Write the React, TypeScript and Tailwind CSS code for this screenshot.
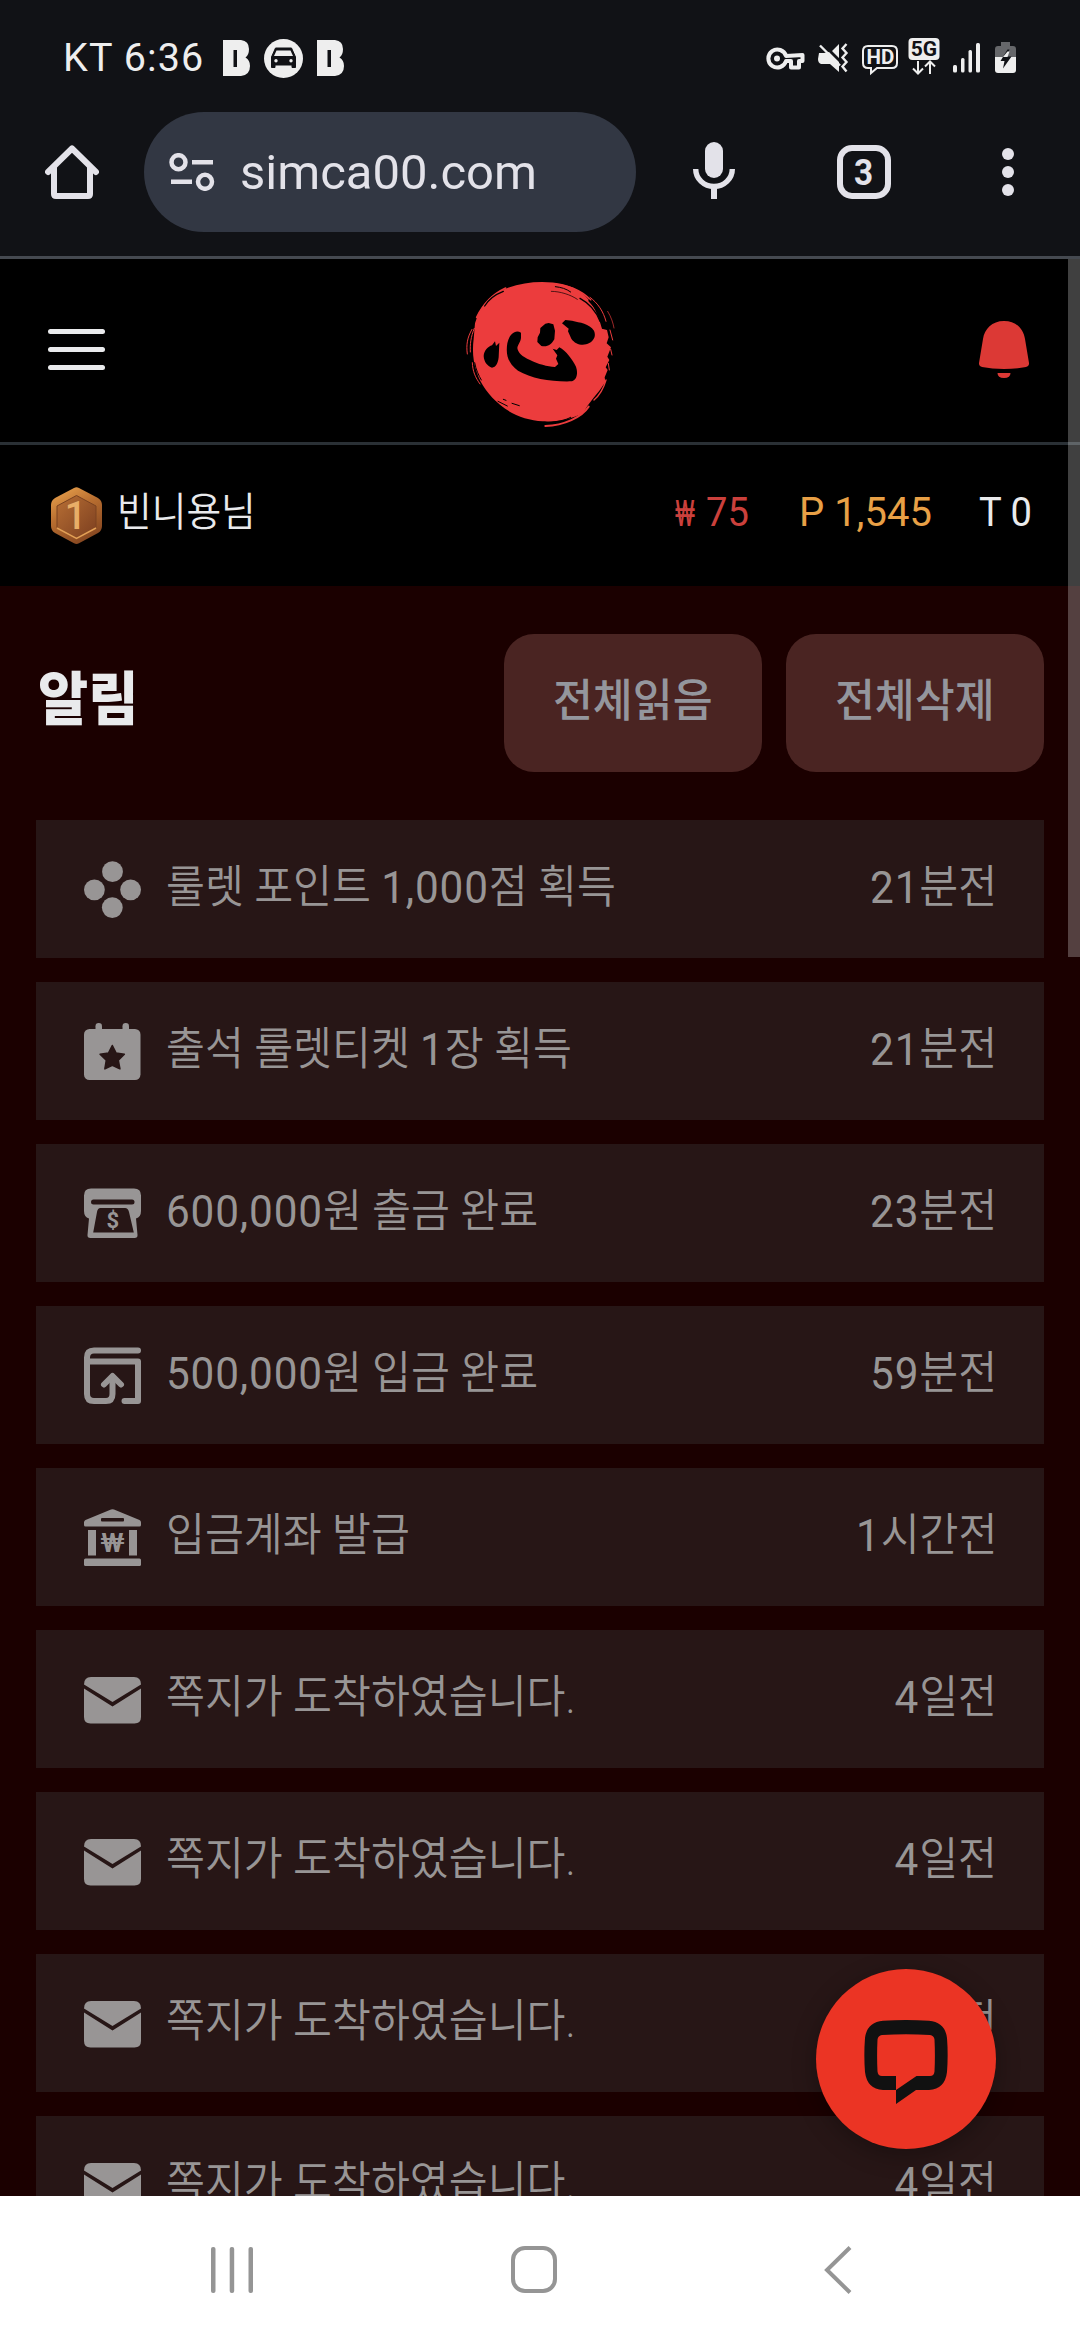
import React from "react";

type IconKind = "point" | "ticket" | "withdraw" | "deposit" | "bank" | "mail";

interface Notice {
  icon: IconKind;
  text: string;
  time: string;
}

const notices: Notice[] = [
  { icon: "point", text: "룰렛 포인트 1,000점 획득", time: "21분전" },
  { icon: "ticket", text: "출석 룰렛티켓 1장 획득", time: "21분전" },
  { icon: "withdraw", text: "600,000원 출금 완료", time: "23분전" },
  { icon: "deposit", text: "500,000원 입금 완료", time: "59분전" },
  { icon: "bank", text: "입금계좌 발급", time: "1시간전" },
  { icon: "mail", text: "쪽지가 도착하였습니다.", time: "4일전" },
  { icon: "mail", text: "쪽지가 도착하였습니다.", time: "4일전" },
  { icon: "mail", text: "쪽지가 도착하였습니다.", time: "4일전" },
  { icon: "mail", text: "쪽지가 도착하였습니다.", time: "4일전" },
];

const NoticeIcon = ({ kind }: { kind: IconKind }) => (
  <svg width="57" height="57" viewBox="0 0 57 57" fill="#989595" className="shrink-0">
    {kind === "point" && (
      <>
        <circle cx="28.5" cy="10.7" r="10.4" />
        <circle cx="10.4" cy="28.8" r="10.4" />
        <circle cx="46.6" cy="28.8" r="10.4" />
        <circle cx="28.3" cy="46.6" r="10.4" />
      </>
    )}
    {kind === "ticket" && (
      <>
        <rect x="0" y="6" width="56.5" height="51" rx="5.5" />
        <rect x="11.5" y="0" width="6.5" height="12" rx="3.2" />
        <rect x="38.5" y="0" width="6.5" height="12" rx="3.2" />
        <path
          d="M28.3 22.5l3.8 7.6 8.2 1.2-6 6 1.6 8.5-7.6-3.6-7.4 3.6 1.4-8.5-6.2-6 8.4-1.2z"
          fill="#271616"
          stroke="#271616"
          strokeWidth="1.6"
          strokeLinejoin="round"
        />
      </>
    )}
    {kind === "withdraw" && (
      <>
        <path d="M7 3.500h43q7 0 7 7V26q0 6-5 7.500L53.500 50q.3 3-3 3H6.500q-3.300 0-3-3L5 33.500q-5-1.500-5-7.500V10.500q0-7 7-7z" />
        <rect x="7" y="14.500" width="43.500" height="5" rx="2.500" fill="#271616" />
        <path d="M16.500 23h24.500q3 0 4 4l4.800 20.500H9.200L13 27q.7-4 3.500-4z" fill="#271616" />
        <text x="28.700" y="43" textAnchor="middle" fontSize="22" fontWeight="700" fontFamily="Roboto, sans-serif">
          $
        </text>
      </>
    )}
    {kind === "deposit" && (
      <g fill="none" stroke="#989595" strokeWidth="6" strokeLinecap="round" strokeLinejoin="round">
        <path d="M54 3.500H10q-7 0-7 7V47q0 7 7 7h12q6.500 0 6.500-7V30" />
        <path d="M4 14.500h50V54H40.500" />
        <path d="M20 37.500l8.500-8.500 8.500 8.500" />
      </g>
    )}
    {kind === "bank" && (
      <>
        <path d="M27 .5q1.500-.7 3 0L55.500 11q1.500.7 1.500 2.500V16q0 1.500-1.500 1.500h-54Q0 17.500 0 16v-2.500Q0 11.700 1.500 11z" />
        <rect x="17" y="9" width="23" height="3.500" rx="1" fill="#271616" />
        <rect x="4" y="21" width="8" height="25.500" />
        <rect x="45" y="21" width="8" height="25.500" />
        <rect x="0" y="49.500" width="57" height="7.500" rx="1.500" />
        <text
          x="16.500"
          y="43"
          textLength="24"
          lengthAdjust="spacingAndGlyphs"
          fontSize="26"
          fontWeight="500"
          fontFamily="Roboto, 'Noto Sans CJK KR', sans-serif"
        >
          ₩
        </text>
      </>
    )}
    {kind === "mail" && (
      <>
        <path d="M0 13.500Q0 6 7 6h43q7 0 7 7.500L28.500 31z" />
        <path d="M0 17.500L28.500 35.500 57 17.500V46q0 6.500-6.500 6.500h-44Q0 52.500 0 46z" />
      </>
    )}
  </svg>
);

const BIcon = () => (
  <svg width="27" height="36" viewBox="0 0 27 36" fill="#eee">
    <path fillRule="evenodd" d="M0 0h18q8 1 8 9 0 6-3.500 8.500Q27 20 27 26q0 9-9 10H0zM10.500 10v17h3.500V10z" />
  </svg>
);

const StatusBar = () => (
  <div className="flex h-[112px] items-start pl-[63px] pr-[63px] pt-[38px] text-[#eee]">
    <span className="w-[141px] whitespace-nowrap text-[39.500px] leading-[40px] tracking-[1.100px]">KT 6:36</span>
    <div className="ml-[19px] flex h-[40px] items-center gap-[14px]">
      <BIcon />
      <svg width="39" height="39" viewBox="0 0 39 39">
        <circle cx="19.500" cy="19.500" r="19.500" fill="#eee" />
        <path
          d="M11.500 9h16l4 9v10.500h-3.500V26H11v2.500H7.500V18z"
          fill="#111216"
          stroke="#111216"
          strokeLinejoin="round"
        />
        <path d="M12.500 11.500h14l2.500 5.500H10z" fill="#eee" />
        <circle cx="12" cy="21.700" r="1.700" fill="#eee" />
        <circle cx="27" cy="21.700" r="1.700" fill="#eee" />
      </svg>
      <BIcon />
    </div>
    <svg className="ml-auto" width="252" height="40" viewBox="765 38 252 40" fill="#eee">
      <g fill="none" stroke="#eee" strokeWidth="4">
        <path d="M786 56a9 9 0 1 0 0 5h5v6.500h8V61h3.500v-6z" strokeLinejoin="round" />
      </g>
      <circle cx="777" cy="58.500" r="3" />
      <path d="M819 53h5l5-1 10 10v10l-9-8h-9q-3-1-3-5zM839 44v14l-7-7z" />
      <path d="M820 45.500l20 20" stroke="#eee" strokeWidth="2.400" />
      <path d="M846.500 44l-4 4.500 4 4.500-4 4.500 4 4.500-4 4.500 4 5" fill="none" stroke="#eee" strokeWidth="2.400" />
      <path
        d="M868 46h24q5 0 5 5v12q0 5-5 5h-15l-6 5v-5h-3q-5 0-5-5V51q0-5 5-5z"
        fill="none"
        stroke="#eee"
        strokeWidth="2"
      />
      <text x="880.500" y="64.200" textAnchor="middle" fontSize="20.500" fontWeight="700" fontFamily="Roboto, sans-serif">
        HD
      </text>
      <rect x="908.500" y="38" width="31" height="22" rx="4" />
      <text
        x="924"
        y="56"
        textAnchor="middle"
        fontSize="21"
        fontWeight="700"
        fill="#111216"
        fontFamily="Roboto, sans-serif"
      >
        5G
      </text>
      <path
        d="M918 61v12.500m-5-5l5 5 5-5M930 74V61.500m-5 5l5-5 5 5"
        fill="none"
        stroke="#eee"
        strokeWidth="2"
      />
      <rect x="953" y="65" width="4" height="7.500" rx="1.500" />
      <rect x="961" y="58" width="3.500" height="14.500" rx="1.500" />
      <rect x="968.500" y="50" width="3.500" height="22.500" rx="1.500" />
      <rect x="976" y="43" width="4" height="29.500" rx="1.500" />
      <path d="M995 57V49q0-3 3-3h3v-4h9v4h3q3 0 3 3v8z" fill="#66676a" />
      <path d="M995 57h21v13q0 3-3 3h-15q-3 0-3-3z" />
      <path d="M1007.500 49.500l-7 11.500h4l-1.500 7.500 8.500-12h-5l3-7z" fill="#111216" />
      <path d="M1003 57l4.500-5.500h2l-2 5.500z" fill="#eee" />
    </svg>
  </div>
);

const BrowserBar = () => (
  <div className="flex h-[147px] items-start border-b-[3px] border-[#454950] pl-[45px] text-[#e3e2e9]">
    <svg className="mt-[33px]" width="54" height="54" viewBox="0 0 54 54" fill="none" stroke="#e3e2e9" strokeWidth="6">
      <path d="M3 27L27 3.500 51 27" strokeLinecap="round" strokeLinejoin="round" />
      <path d="M9 20v29q0 2 2 2h32q2 0 2-2V20" />
    </svg>
    <div className="ml-[45px] flex h-[120px] w-[492px] items-center rounded-full bg-[#323743] pl-[25px]">
      <svg width="46" height="38" viewBox="0 0 46 38" fill="none" stroke="#e3e2e9" strokeWidth="4.500">
        <circle cx="9.500" cy="9.200" r="7" />
        <circle cx="36" cy="28.800" r="7" />
        <path d="M23 9.200h21M2 28.800h21" />
      </svg>
      <span className="ml-[25px] mt-[2px] whitespace-nowrap text-[49px] leading-[60px]">simca00.com</span>
    </div>
    <svg className="ml-[57px] mt-[30px]" width="42" height="57" viewBox="0 0 42 57" fill="#e3e2e9">
      <rect x="12" y="0" width="18" height="36" rx="9" />
      <path d="M2.700 27a18.300 17.500 0 0 0 36.600 0" fill="none" stroke="#e3e2e9" strokeWidth="5.400" />
      <path d="M18 45h6v12h-6z" />
    </svg>
    <div className="ml-[102px] mt-[33px] flex size-[54px] items-center justify-center rounded-[15px] border-[6px] border-[#e3e2e9] text-[37px] font-bold leading-none">
      <span className="inline-block scale-x-[0.9]">3</span>
    </div>
    <div className="ml-[111px] mt-[36px] flex flex-col gap-[6px]">
      <i className="size-[12px] rounded-full bg-[#e3e2e9]" />
      <i className="size-[12px] rounded-full bg-[#e3e2e9]" />
      <i className="size-[12px] rounded-full bg-[#e3e2e9]" />
    </div>
  </div>
);

// brushed red circle with the 心 strokes cut out
const Logo = () => (
  <svg width="160" height="160" viewBox="60 42 480 480" fill="#ec3c3d">
    <path d="M306 66C350 66 392 74 425 98C452 120 468 150 478 180L486 206L501 210L506 232L500 250L513 262L502 290L508 300L497 322L503 330L494 352L496 366L478 392L462 412L442 438L430 458C392 480 345 486 308 484C262 480 216 466 180 434C148 408 122 374 110 336C98 300 97 270 101 236L105 190C112 164 124 142 142 122C182 82 246 66 306 66Z" />
    <g fill="none" stroke="#ec3c3d" strokeLinecap="round">
      <path d="M197 84C158 102 128 134 110 172" strokeWidth="5" />
      <path d="M96 208C82 232 78 254 82 282" strokeWidth="3" />
      <path d="M103 205C92 232 90 252 91 276" strokeWidth="3" />
      <path d="M97 308C98 335 106 352 120 372" strokeWidth="3" />
      <path d="M316 498C372 496 425 472 446 440" strokeWidth="6" />
      <path d="M330 72C385 74 424 90 452 120" strokeWidth="5" />
      <path d="M450 112C474 130 490 154 498 184" strokeWidth="3" />
      <path d="M503 154C514 172 519 188 522 204" strokeWidth="2" />
      <path d="M498 360C490 388 476 408 462 420" strokeWidth="4" />
      <path d="M510 210L518 240M512 268L516 285M505 310L508 330" strokeWidth="3" />
    </g>
    <g fill="none" stroke="#000" strokeLinecap="round">
      <path d="M190 94C164 104 146 118 134 138" strokeWidth="4" />
      <path d="M334 94C360 94 392 104 412 118" strokeWidth="2" />
      <path d="M346 80C364 82 378 86 392 96" strokeWidth="3" />
      <path d="M420 115C448 130 468 152 480 184" strokeWidth="4" />
      <path d="M448 122C470 142 484 164 490 204" strokeWidth="6" />
      <path d="M104 308C108 330 116 346 124 360" strokeWidth="3" />
      <path d="M174 424L202 438M190 418L198 421M216 430L238 437" strokeWidth="3" />
      <path d="M320 488C352 486 378 480 392 472" strokeWidth="3" />
    </g>
    <g fill="#000">
      <path d="M165 244L168 258L178 248L176 292C174 310 168 322 156 323C142 318 132 306 131 288C132 272 144 260 156 256Z" />
      <path d="M243 218C226 208 208 222 202 250C196 286 206 312 234 332C276 356 336 366 396 364C410 360 415 340 408 320C398 300 378 272 358 262L350 270L338 266L352 286L348 296L355 312L345 321C322 320 294 312 270 300C246 290 234 278 232 264C234 252 244 244 243 230Z" />
      <path d="M316 191L326 189L340 193L345 212L343 238C334 254 322 262 304 258L292 246L293 232L300 218L301 204Z" />
      <path d="M366 190L376 180L396 182C420 188 448 190 462 212C468 226 464 240 448 249C430 259 406 254 394 236L384 214L386 206Z" />
    </g>
  </svg>
);

const SiteHeader = () => (
  <header className="flex h-[186px] shrink-0 items-start justify-between border-b-[3px] border-[#2a3035] bg-black pl-[48px] pr-[51px]">
    <div className="mt-[70px] flex w-[57px] flex-col gap-[13px]">
      <i className="h-[5px] rounded-full bg-[#e9eaec]" />
      <i className="h-[5px] rounded-full bg-[#e9eaec]" />
      <i className="h-[5px] rounded-full bg-[#e9eaec]" />
    </div>
    <div className="ml-[-4px] mt-[15px]">
      <Logo />
    </div>
    <svg className="mt-[62px]" width="50" height="57" viewBox="0 0 50 57" fill="#dc3935">
      <path d="M25 0c12 0 19.500 8 21 18l4 24q.4 3-3 4-10 2-22 2T3 46q-3.400-1-3-4l4-24C5.500 8 13 0 25 0zM18.500 52h13q0 5-6.500 5t-6.500-5z" />
    </svg>
  </header>
);

const UserBar = () => (
  <div className="flex h-[141px] shrink-0 items-start bg-black pl-[51px] pr-[48px] pt-[42px] text-[#e9eaec]">
    <svg width="51" height="57" viewBox="0 0 51 57">
      <defs>
        <linearGradient id="rim" x1="0" y1="0" x2=".5" y2="1">
          <stop offset="0" stopColor="#efa850" />
          <stop offset=".5" stopColor="#b86e30" />
          <stop offset="1" stopColor="#8a4a22" />
        </linearGradient>
        <linearGradient id="face" x1="0" y1="0" x2="1" y2="1">
          <stop offset="0" stopColor="#b86f34" />
          <stop offset="1" stopColor="#7c3f20" />
        </linearGradient>
      </defs>
      <path d="M23 1q2.500-1.300 5 0l19 10q4 2.500 4 7v21q0 4.500-4 7L28 56.300q-2.500 1.200-5 0L4 46q-4-2.500-4-7V18q0-4.500 4-7z" fill="url(#rim)" />
      <path d="M25.500 8.500L45 19v21.500L25.500 51 6 40.500V19z" fill="url(#face)" stroke="#7a4220" strokeWidth="1" />
      <path d="M6 41l19.500 10.300L45 41" fill="none" stroke="#e3a056" strokeWidth="1.500" />
      <text x="24.500" y="42" textAnchor="middle" fontSize="38" fontWeight="500" fill="#e9ae68" fontFamily="Roboto, sans-serif">
        1
      </text>
    </svg>
    <span className="ml-[15px] mt-[1px] origin-left scale-x-[0.955] whitespace-nowrap text-[39.500px] font-[350] leading-[50px]">
      빈니용님
    </span>
    <div className="ml-auto mt-[1px] flex whitespace-nowrap text-[41px] leading-[48px]">
      <span className="flex w-[124px] items-baseline text-[#cb403c]">
        <span className="w-[31px] text-[36px]">
          <span className="inline-block origin-left scale-x-[0.75]">₩</span>
        </span>
        <span className="inline-block origin-left scale-x-[0.93]">75</span>
      </span>
      <span className="w-[180px] text-[#e8a046]">
        <span className="inline-block origin-left scale-x-[0.975]">P 1,545</span>
      </span>
      <span className="w-[53px]">
        <span className="inline-block origin-left scale-x-[0.93]">T 0</span>
      </span>
    </div>
  </div>
);

const ActionButton = ({ label }: { label: string }) => (
  <button className="flex h-[138px] w-[258px] items-start justify-center rounded-[30px] bg-[#4a2422] pt-[36px] text-[#94969d]">
    <span className="inline-block scale-x-[0.965] whitespace-nowrap text-[45px] font-medium leading-[64px]">{label}</span>
  </button>
);

// numerals are set slightly wider than the hangul around them
const Spaced = ({ text }: { text: string }) => (
  <>
    {text.split(/([\d,]+)/).map((part, i) =>
      i % 2 ? (
        <span key={i} className="font-normal tracking-[0.900px]">
          {part}
        </span>
      ) : (
        part
      )
    )}
  </>
);

const NoticeRow = ({ icon, text, time }: Notice) => (
  <li className="flex h-[138px] shrink-0 items-center bg-[#271616] pl-[48px] pr-[47px] text-[45px] font-[350] leading-[64px] text-[#989595]">
    <NoticeIcon kind={icon} />
    <span className="ml-[25px] mt-[-3px] origin-left scale-x-[0.94] whitespace-nowrap">
      <Spaced text={text} />
    </span>
    <span className="ml-auto mt-[-3px] origin-right scale-x-[0.94] whitespace-nowrap">
      <Spaced text={time} />
    </span>
  </li>
);

const NavBar = () => (
  <nav className="flex h-[144px] shrink-0 items-start bg-white pl-[211px] pt-[50px]">
    <svg width="42" height="48" viewBox="0 0 42 48" fill="#959595">
      <rect x="0" y="1" width="4.500" height="46" rx="2" />
      <rect x="18.700" y="1" width="4.500" height="46" rx="2" />
      <rect x="37.500" y="1" width="4.500" height="46" rx="2" />
    </svg>
    <div className="ml-[258px] h-[47px] w-[46px] rounded-[14px] border-[4px] border-[#959595]" />
    <svg className="ml-[267px]" width="28" height="48" viewBox="0 0 28 48" fill="none" stroke="#959595" strokeWidth="4">
      <path d="M26 1.500L3 24l23 22.500" />
    </svg>
  </nav>
);

const ChatButton = () => (
  <div className="absolute left-[816px] top-[1969px] flex size-[180px] justify-center rounded-full bg-[#eb3424] pt-[51px] shadow-[0_6px_24px_rgba(0,0,0,0.3)]">
    <svg width="84" height="84" viewBox="0 0 84 84" fill="#111">
      <path
        fillRule="evenodd"
        d="M19 .7Q42-.7 65 .7 81 2 83 18q1.300 17 0 34-2 17-18 18H52L32 84V56H18q-4 0-4.500-4.500-.8-15.500 0-32 .5-4 4.500-4.500 24-1.500 48 0 4 .5 4.500 4.500.8 16.500 0 32Q70 56 66 56H52.500L32 70H19Q3 69 1 52-.3 35 1 18 3 2 19 .7z"
      />
    </svg>
  </div>
);

const App = () => {
  return (
    <div className="relative flex h-[2340px] w-[1080px] flex-col overflow-hidden bg-[#1b0000] font-['Roboto','Noto_Sans_CJK_KR',sans-serif]">
      <div className="shrink-0 bg-[#111216]">
        <StatusBar />
        <BrowserBar />
      </div>
      <SiteHeader />
      <UserBar />
      <main className="flex min-h-0 flex-1 flex-col overflow-hidden px-[36px] pt-[48px]">
        <div className="flex shrink-0 items-start gap-6">
          <h1 className="ml-[2px] mr-auto mt-[26px] origin-left scale-x-[0.94] whitespace-nowrap text-[58px] font-black leading-[80px] text-[#e9eaec]">
            알림
          </h1>
          <ActionButton label="전체읽음" />
          <ActionButton label="전체삭제" />
        </div>
        <ul className="mt-[48px] flex flex-col gap-6">
          {notices.map((notice, i) => (
            <NoticeRow key={i} {...notice} />
          ))}
        </ul>
      </main>
      <NavBar />
      <ChatButton />
      <div className="absolute right-0 top-[259px] h-[698px] w-[12px] bg-white/25" />
    </div>
  );
};

export default App;
